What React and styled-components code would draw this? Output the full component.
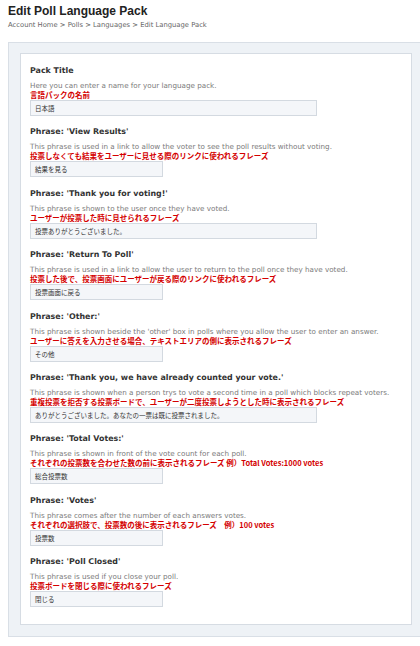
import React from 'react';
import styled, { createGlobalStyle } from 'styled-components';

const GlobalStyle = createGlobalStyle`
  html, body {
    margin: 0;
    padding: 0;
    background: #fff;
    overflow: hidden;
  }
  body {
    font-family: "DejaVu Sans", Verdana, sans-serif;
    color: #333;
  }
`;

const Page = styled.div`
  width: 420px;
  height: 646px;
  overflow: hidden;
`;

const Title = styled.h1`
  margin: 0;
  padding: 4px 0 0 8px;
  font-family: "Liberation Sans", Arial, sans-serif;
  font-size: 12px;
  line-height: 14px;
  font-weight: bold;
  color: #222;
`;

const Crumbs = styled.div`
  padding: 3px 0 0 8px;
  font-size: 6.8px;
  line-height: 9px;
  color: #666;
`;

const Outer = styled.div`
  margin: 12px 0 0 8px;
  width: 415px;
  box-sizing: border-box;
  padding: 10px 10px 11px 11px;
  background: #eef2f6;
  border: 1px solid #d9dfe6;
`;

const Inner = styled.div`
  background: #fff;
  border: 1px solid #d6dce3;
  padding: 11px 9px 6px;
  display: flex;
  flex-direction: column;
`;

const Field = styled.div`
  margin-bottom: 10.4px;
`;

const Heading = styled.div`
  font-size: 7.9px;
  line-height: 12px;
  font-weight: bold;
  color: #333;
  margin-bottom: 4px;
`;

const Help = styled.div`
  font-size: 7.2px;
  line-height: 9px;
  color: #7a7a7a;
  white-space: nowrap;
`;

const Note = styled.div`
  font-family: "Noto Sans CJK JP", "Noto Sans", sans-serif;
  font-size: 7.5px;
  line-height: 10px;
  font-weight: bold;
  color: #d40000;
  white-space: nowrap;
`;

const Input = styled.div`
  box-sizing: border-box;
  width: ${p => (p.$wide ? 287 : 133)}px;
  height: 16px;
  padding: 0 4px;
  border: 1px solid #d3d9e0;
  background: #f4f6f9;
  font-family: "Noto Sans CJK JP", sans-serif;
  font-size: 6.5px;
  line-height: 14px;
  color: #333;
  white-space: nowrap;
`;

const fields = [
  {
    title: 'Pack Title',
    help: 'Here you can enter a name for your language pack.',
    note: '言語パックの名前',
    value: '日本語',
    wide: true,
  },
  {
    title: "Phrase: 'View Results'",
    help: 'This phrase is used in a link to allow the voter to see the poll results without voting.',
    note: '投票しなくても結果をユーザーに見せる際のリンクに使われるフレーズ',
    value: '結果を見る',
  },
  {
    title: "Phrase: 'Thank you for voting!'",
    help: 'This phrase is shown to the user once they have voted.',
    note: 'ユーザーが投票した時に見せられるフレーズ',
    value: '投票ありがとうございました。',
    wide: true,
  },
  {
    title: "Phrase: 'Return To Poll'",
    help: 'This phrase is used in a link to allow the user to return to the poll once they have voted.',
    note: '投票した後で、投票画面にユーザーが戻る際のリンクに使われるフレーズ',
    value: '投票画面に戻る',
  },
  {
    title: "Phrase: 'Other:'",
    help: "This phrase is shown beside the 'other' box in polls where you allow the user to enter an answer.",
    note: 'ユーザーに答えを入力させる場合、テキストエリアの側に表示されるフレーズ',
    value: 'その他',
  },
  {
    title: "Phrase: 'Thank you, we have already counted your vote.'",
    help: 'This phrase is shown when a person trys to vote a second time in a poll which blocks repeat voters.',
    note: '重複投票を拒否する投票ボードで、ユーザーが二度投票しようとした時に表示されるフレーズ',
    value: 'ありがとうございました。あなたの一票は既に投票されました。',
    wide: true,
  },
  {
    title: "Phrase: 'Total Votes:'",
    help: 'This phrase is shown in front of the vote count for each poll.',
    note: 'それぞれの投票数を合わせた数の前に表示されるフレーズ 例）Total Votes:1000 votes',
    value: '総合投票数',
  },
  {
    title: "Phrase: 'Votes'",
    help: 'This phrase comes after the number of each answers votes.',
    note: 'それぞれの選択肢で、投票数の後に表示されるフレーズ　例）100 votes',
    value: '投票数',
  },
  {
    title: "Phrase: 'Poll Closed'",
    help: 'This phrase is used if you close your poll.',
    note: '投票ボードを閉じる際に使われるフレーズ',
    value: '閉じる',
  },
];

export default function App() {
  return (
    <Page>
      <GlobalStyle />
      <Title>Edit Poll Language Pack</Title>
      <Crumbs>Account Home &gt; Polls &gt; Languages &gt; Edit Language Pack</Crumbs>
      <Outer>
        <Inner>
          {fields.map(f => (
            <Field key={f.title}>
              <Heading>{f.title}</Heading>
              <Help>{f.help}</Help>
              <Note>{f.note}</Note>
              <Input $wide={f.wide}>{f.value}</Input>
            </Field>
          ))}
        </Inner>
      </Outer>
    </Page>
  );
}
